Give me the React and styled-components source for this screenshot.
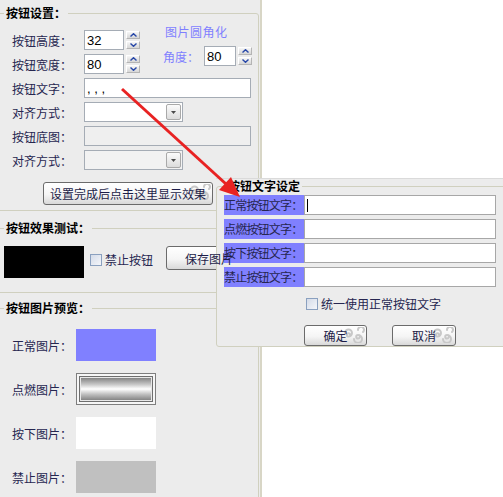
import React from "react";
import styled, { createGlobalStyle } from "styled-components";

const GlobalStyle = createGlobalStyle`
    html, body {
        margin: 0;
        padding: 0;
        background: #fff;
    }
    body {
        font-family: "Noto Sans CJK SC", "Liberation Sans", sans-serif;
        font-size: 12px;
        overflow: hidden;
    }
`;

const Page = styled.div`
    position: relative;
    width: 503px;
    height: 497px;
    overflow: hidden;
    display: flex;
`;

const LeftPanel = styled.div`
    width: 260px;
    height: 491px;
    padding-top: 6px;
    background: #ececec;
    border-right: 2px solid #d8d6c6;
    overflow: hidden;
`;

const GroupBox = styled.fieldset`
    margin: ${p => p.$mt || 0}px 0 0 -3px;
    width: 262px;
    box-sizing: border-box;
    min-width: 0;
    padding: 0;
    border: 1px solid #d0d0bf;
    border-radius: 3px;
`;

const GroupBody = styled.div`
    padding: ${p => p.$pad};
`;

const Legend = styled.legend`
    margin-left: ${p => p.$ml || 6}px;
    padding: 0 2px;
    height: 14px;
    line-height: 14px;
    font-size: 12px;
    font-weight: bold;
    color: #000;
`;

const TopArea = styled.div`
    display: flex;
    align-items: flex-start;
`;

const Column = styled.div`
    display: flex;
    flex-direction: column;
    gap: 4px;
`;

const RightCol = styled.div`
    display: flex;
    flex-direction: column;
    margin: -6px 0 0 23px;
`;

const RoundTitle = styled.div`
    height: 16px;
    line-height: 16px;
    padding-left: 2px;
    margin-bottom: 6px;
    color: #7f7fff;
    font-size: 12px;
    letter-spacing: 0.5px;
`;

const Rows = styled.div`
    display: flex;
    flex-direction: column;
    gap: 4px;
    margin-top: 4px;
`;

const Row = styled.div`
    display: flex;
    align-items: center;
    height: ${p => p.$h || 20}px;
`;

const Label = styled.div`
    width: ${p => p.$w}px;
    flex-shrink: 0;
    color: ${p => p.$color || "#262650"};
    font-size: 12px;
    white-space: nowrap;
`;

const Field = styled.div`
    width: ${p => p.$w}px;
    height: 20px;
    box-sizing: border-box;
    border: 1px solid #a5acb5;
    background: ${p => (p.$disabled ? "#efefef" : "#fff")};
    display: flex;
    align-items: center;
    padding-left: 2px;
    font-family: "Liberation Sans", Arial, sans-serif;
    font-size: 13px;
    color: #000;
`;

const Spinner = styled.div`
    display: flex;
    flex-direction: column;
    gap: 2px;
    margin-left: 2px;
`;

const SpinBtn = styled.div`
    width: 14px;
    height: 8px;
    box-sizing: border-box;
    border: 1px solid #b4b4b4;
    border-top-color: #fff;
    border-left-color: #fff;
    background: linear-gradient(#f6f6f6, #d6d6d6);
    display: flex;
    align-items: center;
    justify-content: center;
`;

const Combo = styled.div`
    width: 99px;
    height: 20px;
    box-sizing: border-box;
    border: 1px solid #a5acb5;
    background: ${p => (p.$disabled ? "#f2f2f2" : "#fff")};
    display: flex;
    justify-content: flex-end;
    padding: 1px;
`;

const DropBtn = styled.div`
    width: 15px;
    height: 16px;
    box-sizing: border-box;
    border: 1px solid #a9a9a9;
    border-radius: 2px;
    background: linear-gradient(#fbfbfb, #dcdcdc);
    display: flex;
    align-items: center;
    justify-content: center;
`;

const XPButton = styled.div`
    position: relative;
    width: ${p => p.$w}px;
    height: ${p => p.$h}px;
    margin-left: ${p => p.$ml || 0}px;
    margin-top: ${p => p.$mt || 0}px;
    box-sizing: border-box;
    border: 1px solid #6b6b6b;
    border-radius: 3px;
    background: linear-gradient(#ffffff, #f5f5f5 55%, #d9d9d9);
    display: flex;
    align-items: center;
    justify-content: center;
    color: #1c1c48;
    font-size: 12px;
    overflow: hidden;
    flex-shrink: 0;
`;

const ButtonText = styled.span`
    position: relative;
    z-index: 1;
    white-space: nowrap;
`;

const SwirlMark = styled.svg`
    position: absolute;
    right: 1px;
    top: 1px;
`;

const TestRow = styled.div`
    display: flex;
    align-items: flex-start;
`;

const BlackBox = styled.div`
    width: 80px;
    height: 32px;
    background: #000;
`;

const CheckWrap = styled.div`
    display: flex;
    align-items: center;
    margin: ${p => p.$m};
    color: #262650;
    font-size: 12px;
`;

const CheckBox = styled.div`
    width: 12px;
    height: 12px;
    box-sizing: border-box;
    border: 1px solid #8aa0bf;
    background: linear-gradient(135deg, #d4dbe8, #f4f6fa);
    margin-right: 3px;
`;

const PreviewList = styled.div`
    display: flex;
    flex-direction: column;
    gap: 12px;
`;

const Preview = styled.div`
    width: 80px;
    height: 32px;
    box-sizing: border-box;
    background: ${p => p.$bg};
`;

const MetalOuter = styled.div`
    width: 80px;
    height: 32px;
    box-sizing: border-box;
    border: 1px solid #7e7e7e;
    padding: 2px;
    background: #f6f6f6;
    display: flex;
`;

const MetalInner = styled.div`
    flex: 1;
    border: 1px solid #6e6e6e;
    box-shadow: inset 0 0 0 1px #e8e8e8;
    background: linear-gradient(#7a7a7a, #c4c4c4 30%, #ffffff 50%, #c0c0c0 72%, #7a7a7a);
`;

const Popup = styled.div`
    position: absolute;
    left: 216px;
    top: 178px;
    width: 287px;
    height: 169px;
    box-sizing: border-box;
    background: #ececec;
    border-top: 1px solid #dadada;
    overflow: hidden;
`;

const PopupGroup = styled.fieldset`
    margin: 0;
    width: 320px;
    height: 168px;
    box-sizing: border-box;
    min-width: 0;
    padding: 0;
    border: 1px solid #d0d0bf;
    border-radius: 3px;
`;

const PopupRow = styled.div`
    display: flex;
    height: 20px;
    margin-bottom: 4px;
`;

const HiliteLabel = styled.div`
    width: 80px;
    height: 20px;
    line-height: 20px;
    background: #8080ff;
    color: #262650;
    font-size: 12px;
    letter-spacing: -0.8px;
    white-space: nowrap;
    overflow: hidden;
`;

const TextBox = styled.div`
    width: 192px;
    height: 20px;
    box-sizing: border-box;
    border: 1px solid #a7a7a7;
    background: #fff;
    display: flex;
    align-items: center;
`;

const Caret = styled.div`
    width: 1px;
    height: 13px;
    margin-left: 2px;
    background: #000;
`;

const ButtonRow = styled.div`
    display: flex;
    gap: 25px;
    margin: 13px 0 0 80px;
`;

const ArrowLayer = styled.svg`
    position: absolute;
    left: 0;
    top: 0;
    pointer-events: none;
    z-index: 5;
`;

const Chevron = ({ down }) => (
    <svg width="7" height="4" viewBox="0 0 7 4">
        <path d={down ? "M0.5 0.5 L3.5 3.3 L6.5 0.5" : "M0.5 3.5 L3.5 0.7 L6.5 3.5"} stroke="#2848a8" strokeWidth="1.4" fill="none" />
    </svg>
);

const SpinBox = () => (
    <Spinner>
        <SpinBtn><Chevron /></SpinBtn>
        <SpinBtn><Chevron down /></SpinBtn>
    </Spinner>
);

const DropArrow = () => (
    <svg width="5" height="3" viewBox="0 0 5 3">
        <path d="M0 0 H5 L2.5 3 Z" fill="#4a4a4a" />
    </svg>
);

const Swirl = () => (
    <SwirlMark width="22" height="16" viewBox="0 0 22 16">
        <g stroke="#c8c8c8" strokeWidth="2" fill="none" strokeLinecap="round">
            <path d="M2 6 a3.5 3.5 0 1 1 3.5 3.5 a1.6 1.6 0 1 1 1.6 -1.6" />
            <path d="M11 12 a4 4 0 1 0 4 -4 a1.8 1.8 0 1 0 1.8 1.8" />
            <path d="M15 3 a3 3 0 1 1 5 2" />
        </g>
    </SwirlMark>
);

const Button = ({ w, h, ml, mt, children }) => (
    <XPButton $w={w} $h={h} $ml={ml} $mt={mt}>
        <Swirl />
        <ButtonText>{children}</ButtonText>
    </XPButton>
);

const previews = [
    { name: "正常图片：", bg: "#8080ff" },
    { name: "点燃图片：", metal: true },
    { name: "按下图片：", bg: "#ffffff" },
    { name: "禁止图片：", bg: "#c0c0c0" },
];

const textRows = ["正常按钮文字：", "点燃按钮文字：", "按下按钮文字：", "禁止按钮文字："];

const App = () => {
    return (
        <Page>
            <GlobalStyle />
            <LeftPanel>
                <GroupBox>
                    <Legend>按钮设置：</Legend>
                    <GroupBody $pad="10px 0 5px 14px">
                        <TopArea>
                            <Column>
                                <Row>
                                    <Label $w={72}>按钮高度：</Label>
                                    <Field $w={40}>32</Field>
                                    <SpinBox />
                                </Row>
                                <Row>
                                    <Label $w={72}>按钮宽度：</Label>
                                    <Field $w={40}>80</Field>
                                    <SpinBox />
                                </Row>
                            </Column>
                            <RightCol>
                                <RoundTitle>图片圆角化</RoundTitle>
                                <Row>
                                    <Label $w={41} $color="#7f7fff">角度：</Label>
                                    <Field $w={32}>80</Field>
                                    <SpinBox />
                                </Row>
                            </RightCol>
                        </TopArea>
                        <Rows>
                            <Row>
                                <Label $w={72}>按钮文字：</Label>
                                <Field $w={167}>, , ,</Field>
                            </Row>
                            <Row>
                                <Label $w={72}>对齐方式：</Label>
                                <Combo><DropBtn><DropArrow /></DropBtn></Combo>
                            </Row>
                            <Row>
                                <Label $w={72}>按钮底图：</Label>
                                <Field $w={167} $disabled />
                            </Row>
                            <Row>
                                <Label $w={72}>对齐方式：</Label>
                                <Combo $disabled><DropBtn><DropArrow /></DropBtn></Combo>
                            </Row>
                        </Rows>
                        <Button w={170} h={23} ml={31} mt={12}>设置完成后点击这里显示效果</Button>
                    </GroupBody>
                </GroupBox>

                <GroupBox $mt={10}>
                    <Legend>按钮效果测试：</Legend>
                    <GroupBody $pad="11px 0 14px 6px">
                        <TestRow>
                            <BlackBox />
                            <CheckWrap $m="5px 0 0 6px">
                                <CheckBox />
                                禁止按钮
                            </CheckWrap>
                            <Button w={86} h={24} ml={13}>保存图片</Button>
                        </TestRow>
                    </GroupBody>
                </GroupBox>

                <GroupBox $mt={8}>
                    <Legend>按钮图片预览：</Legend>
                    <GroupBody $pad="14px 0 40px 14px">
                        <PreviewList>
                            {previews.map(p => (
                                <Row key={p.name} $h={32}>
                                    <Label $w={64}>{p.name}</Label>
                                    {p.metal ? (
                                        <MetalOuter><MetalInner /></MetalOuter>
                                    ) : (
                                        <Preview $bg={p.bg} />
                                    )}
                                </Row>
                            ))}
                        </PreviewList>
                    </GroupBody>
                </GroupBox>
            </LeftPanel>

            <Popup>
                <PopupGroup>
                    <Legend $ml={9}>按钮文字设定</Legend>
                    <GroupBody $pad="2px 0 0 7px">
                        {textRows.map((t, i) => (
                            <PopupRow key={t}>
                                <HiliteLabel>{t}</HiliteLabel>
                                <TextBox>{i === 0 && <Caret />}</TextBox>
                            </PopupRow>
                        ))}
                        <CheckWrap $m="8px 0 0 82px">
                            <CheckBox />
                            统一使用正常按钮文字
                        </CheckWrap>
                        <ButtonRow>
                            <Button w={63} h={21}>确定</Button>
                            <Button w={64} h={21}>取消</Button>
                        </ButtonRow>
                    </GroupBody>
                </PopupGroup>
            </Popup>

            <ArrowLayer width="503" height="497" viewBox="0 0 503 497">
                <line x1="122" y1="89" x2="226" y2="184" stroke="#e82222" strokeWidth="3" />
                <polygon points="240,197 219,190 231,177" fill="#e82222" />
            </ArrowLayer>
        </Page>
    );
};

export default App;
